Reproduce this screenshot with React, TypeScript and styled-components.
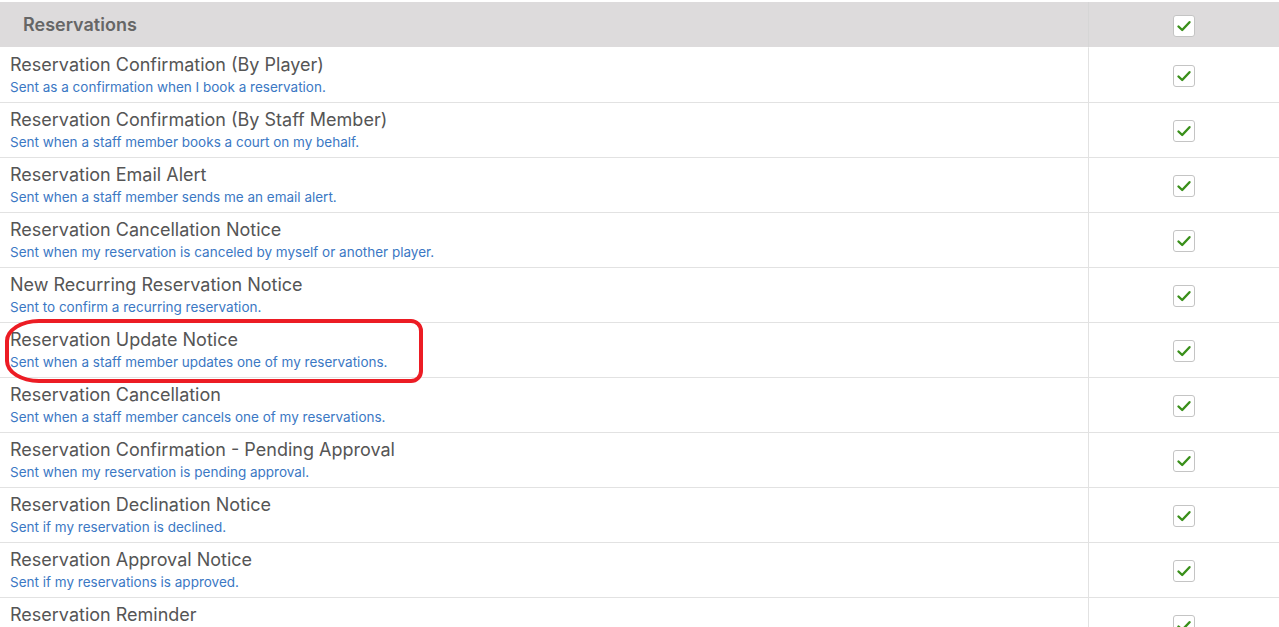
import React from 'react';
import styled, { createGlobalStyle } from 'styled-components';

const GlobalStyle = createGlobalStyle`
    html, body {
        margin: 0;
        padding: 0;
        background: #fff;
        font-family: Inter, "Noto Sans", sans-serif;
    }
`;

const notifications = [
    { title: 'Reservation Confirmation (By Player)', note: 'Sent as a confirmation when I book a reservation.' },
    { title: 'Reservation Confirmation (By Staff Member)', note: 'Sent when a staff member books a court on my behalf.' },
    { title: 'Reservation Email Alert', note: 'Sent when a staff member sends me an email alert.' },
    { title: 'Reservation Cancellation Notice', note: 'Sent when my reservation is canceled by myself or another player.' },
    { title: 'New Recurring Reservation Notice', note: 'Sent to confirm a recurring reservation.' },
    { title: 'Reservation Update Notice', note: 'Sent when a staff member updates one of my reservations.', marked: true },
    { title: 'Reservation Cancellation', note: 'Sent when a staff member cancels one of my reservations.' },
    { title: 'Reservation Confirmation - Pending Approval', note: 'Sent when my reservation is pending approval.' },
    { title: 'Reservation Declination Notice', note: 'Sent if my reservation is declined.' },
    { title: 'Reservation Approval Notice', note: 'Sent if my reservations is approved.' },
    { title: 'Reservation Reminder', note: 'Sent as a reminder before my reservation.' },
];

const Page = styled.div`
    padding-top: 2px;
    height: 625px;
    overflow: hidden;
    position: relative;
`;

const Table = styled.div`
    display: grid;
    grid-template-columns: 1089px 1fr;
`;

const HeaderCell = styled.div<{ $last?: boolean }>`
    background: #dddbdc;
    height: 45px;
    display: flex;
    align-items: center;
    justify-content: ${p => (p.$last ? 'center' : 'flex-start')};
    padding-left: ${p => (p.$last ? '0' : '23px')};
    border-right: ${p => (p.$last ? 'none' : '1px solid #d6d6d6')};
    border-bottom: 1px solid #fff;
    font-size: 18px;
    font-weight: 600;
    color: #666;
`;

const Cell = styled.div<{ $last?: boolean }>`
    position: relative;
    box-sizing: border-box;
    height: 55px;
    border-bottom: 1px solid #e2e2e2;
    border-right: ${p => (p.$last ? 'none' : '1px solid #e2e2e2')};
    display: flex;
    flex-direction: column;
    justify-content: ${p => (p.$last ? 'center' : 'flex-start')};
    align-items: ${p => (p.$last ? 'center' : 'flex-start')};
    padding-left: ${p => (p.$last ? '0' : '10px')};
`;

const Title = styled.div`
    margin-top: 5px;
    font-size: 18px;
    line-height: 24px;
    color: #555;
`;

const Note = styled.div`
    margin-top: 1px;
    font-size: 13.5px;
    line-height: 18px;
    color: #3b78c4;
`;

const Box = styled.span`
    width: 20px;
    height: 20px;
    border: 1px solid #c4c4c4;
    border-radius: 3px;
    background: #fff;
    display: flex;
    align-items: center;
    justify-content: center;
    margin-left: -1px;
    margin-top: 2px;
`;

const Marker = styled.div`
    position: absolute;
    left: 5px;
    top: -4px;
    box-sizing: border-box;
    width: 418px;
    height: 64px;
    border: 4px solid #ec1c24;
    border-radius: 34px 12px 12px 34px / 22px 12px 12px 22px;
    pointer-events: none;
`;

const Check = () => (
    <Box>
        <svg width="16" height="16" viewBox="0 0 16 16">
            <path d="M2.5 8.5 L6.2 12 L13.5 4.2" fill="none" stroke="#3a901a" strokeWidth="2.4" strokeLinecap="round" strokeLinejoin="round" />
        </svg>
    </Box>
);

export default function App() {
    return (
        <Page>
            <GlobalStyle />
            <Table>
                <HeaderCell>Reservations</HeaderCell>
                <HeaderCell $last>
                    <Check />
                </HeaderCell>
                {notifications.map(n => (
                    <React.Fragment key={n.title}>
                        <Cell>
                            <Title>{n.title}</Title>
                            <Note>{n.note}</Note>
                            {n.marked && <Marker />}
                        </Cell>
                        <Cell $last>
                            <Check />
                        </Cell>
                    </React.Fragment>
                ))}
            </Table>
        </Page>
    );
}
